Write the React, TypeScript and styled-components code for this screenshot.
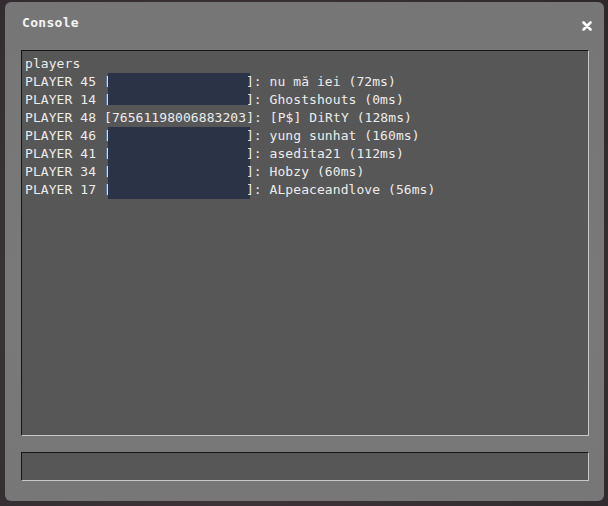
import React from 'react';
import styled, { createGlobalStyle } from 'styled-components';

const Global = createGlobalStyle`
  html, body {
    margin: 0;
    padding: 0;
    background: #3a3236;
  }
  #root {
    width: 608px;
    height: 506px;
  }
`;

const Page = styled.div`
  width: 608px;
  height: 506px;
  box-sizing: border-box;
  padding: 2px 4px 5px 5px;
  background: radial-gradient(circle at 40% 60%, #4a3f44 0%, #3a3236 45%, #2e282c 100%);
`;

const Window = styled.section`
  width: 599px;
  height: 499px;
  box-sizing: border-box;
  background: linear-gradient(180deg, #767676 0%, #797979 60%, #777777 100%);
  border-radius: 6px;
  padding: 0 15px 20px 16px;
  display: flex;
  flex-direction: column;
`;

const Header = styled.header`
  height: 48px;
  flex: none;
  display: flex;
  align-items: flex-start;
  justify-content: space-between;
  padding-top: 13px;
  box-sizing: border-box;
`;

const Title = styled.h1`
  margin: 0 0 0 1px;
  font-family: 'DejaVu Sans Mono', 'Liberation Mono', monospace;
  font-weight: bold;
  font-size: 13px;
  letter-spacing: 0.3px;
  line-height: 16px;
  color: #f4f4f4;
`;

const Close = styled.button`
  border: 0;
  background: none;
  padding: 0;
  margin: 6px -3px 0 0;
  width: 10px;
  height: 10px;
  cursor: pointer;
  display: flex;
`;

const Inset = styled.div`
  box-sizing: border-box;
  background: #575757;
  border: 1px solid;
  border-color: #151515 #c8c8c8 #c8c8c8 #151515;
`;

const Output = styled(Inset)`
  flex: 1;
  padding: 4px 3px;
  overflow: hidden;
  font-family: 'DejaVu Sans Mono', 'Liberation Mono', monospace;
  font-size: 13px;
  letter-spacing: 0.07px;
  line-height: 18px;
  color: #ececec;
  white-space: pre;
`;

const Line = styled.div`
  height: 18px;
`;

const Redacted = styled.span<{ $short?: boolean }>`
  display: inline-block;
  vertical-align: top;
  width: 142px;
  height: ${p => (p.$short ? '14px' : '18px')};
  margin: 0 -4px 0 -4px;
  background: #2b3446;
`;

const Input = styled(Inset)`
  flex: none;
  height: 29px;
  margin-top: 16px;
`;

type Player = { id: number; steam?: string; name: string; ping: number; short?: boolean };

const players: Player[] = [
  { id: 45, name: 'nu mă iei', ping: 72 },
  { id: 14, name: 'Ghostshouts', ping: 0, short: true },
  { id: 48, steam: '76561198006883203', name: '[P$] DiRtY', ping: 128 },
  { id: 46, name: 'yung sunhat', ping: 160 },
  { id: 41, name: 'asedita21', ping: 112 },
  { id: 34, name: 'Hobzy', ping: 60 },
  { id: 17, name: 'ALpeaceandlove', ping: 56 },
];

function CloseIcon() {
  return (
    <svg width="10" height="10" viewBox="0 0 10 10">
      <path d="M1.5 1.5 L8.5 8.5 M8.5 1.5 L1.5 8.5" stroke="#fff" strokeWidth="2.6" strokeLinecap="round" />
    </svg>
  );
}

export default function App() {
  return (
    <Page>
      <Global />
      <Window>
        <Header>
          <Title>Console</Title>
          <Close aria-label="Close">
            <CloseIcon />
          </Close>
        </Header>
        <Output>
          <Line>players</Line>
          {players.map(p => (
            <Line key={p.id}>
              {`PLAYER ${p.id} [`}
              {p.steam ? p.steam : <Redacted $short={p.short} />}
              {`]: ${p.name} (${p.ping}ms)`}
            </Line>
          ))}
        </Output>
        <Input />
      </Window>
    </Page>
  );
}
